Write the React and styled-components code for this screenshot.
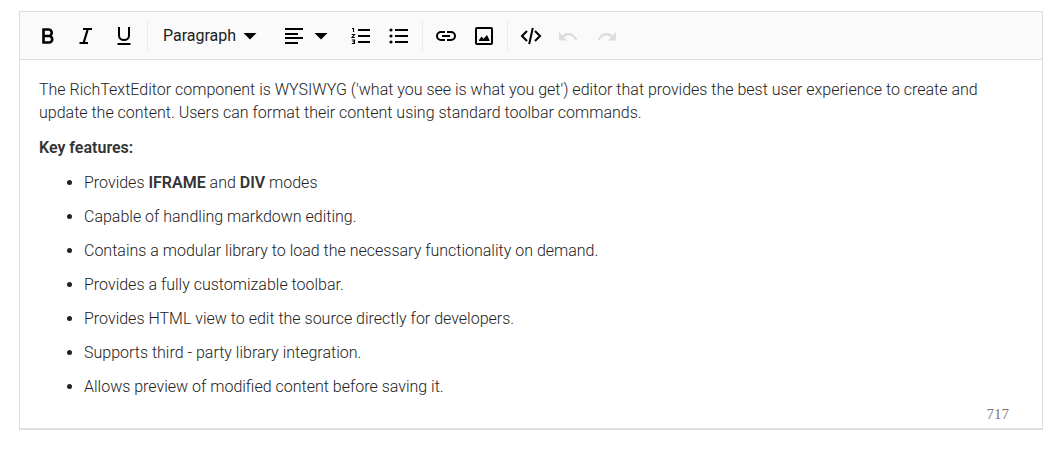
import React from "react";
import styled, { createGlobalStyle } from "styled-components";

const GlobalStyle = createGlobalStyle`
  *, *::before, *::after { box-sizing: border-box; }
  body { margin: 0; background: #fff; font-family: Roboto, "Liberation Sans", sans-serif; }
`;

const Page = styled.main`
  padding: 11px 21px 20px 19px;
`;

const Editor = styled.section`
  border: 1px solid #dedede;
  border-bottom-width: 2px;
  background: #fff;
`;

const Toolbar = styled.div`
  display: flex;
  align-items: center;
  height: 48px;
  padding-left: 9px;
  background: #fafafa;
  border-bottom: 1px solid #dedede;
`;

const Separator = styled.span`
  width: 1px;
  height: 31px;
  margin: 0 4px;
  background: #ebebeb;
`;

const ToolButton = styled.button`
  display: flex;
  flex: none;
  align-items: center;
  justify-content: center;
  width: 38px;
  height: 38px;
  padding: 0;
  border: 0;
  background: transparent;
  color: #000;
  &:disabled { color: #dcdcdc; }
`;

const DropButton = styled(ToolButton)`
  width: auto;
  gap: 2px;
  padding: 0 9px 0 11px;
  font: 400 16px/24px Roboto, "Liberation Sans", sans-serif;
  color: #212121;
  svg { color: #000; }
`;

const IconDropButton = styled(DropButton)`
  gap: 3px;
`;

const Content = styled.div`
  padding: 18px 19px 0;
  font-size: 16px;
  font-weight: 300;
  line-height: 23px;
  color: #222;
  strong { font-weight: 600; color: #333; }
`;

const Paragraph = styled.p`
  margin: 0 0 12px;
`;

const FeatureList = styled.ul`
  margin: 0;
  padding-left: 45px;
`;

const Feature = styled.li`
  margin-bottom: 10px;
  line-height: 24px;
  &:last-child { margin-bottom: 6px; }
`;

const Count = styled.div`
  padding: 0 33px 5px 0;
  text-align: right;
  font: 15px/18px "Liberation Serif", serif;
  color: #777;
`;

const Svg = ({ children }) => (
  <svg width="24" height="24" viewBox="0 0 24 24" fill="none" stroke="currentColor" strokeWidth="2" aria-hidden="true">
    {children}
  </svg>
);

const Bold = () => (
  <Svg><path d="M7.500 5.500h5a3.200 3.200 0 0 1 0 6.500h-5zM7.500 12H13a3.200 3.200 0 0 1 0 6.500H7.500z" strokeWidth="2.6" /></Svg>
);
const Italic = () => (
  <Svg><path d="M9 5h9M5.5 19h8.5M13.8 5l-4.2 14" strokeWidth="2.2" /></Svg>
);
const Underline = () => (
  <Svg><path d="M7 3v8.5a5 4.5 0 0 0 10 0V3M5.5 20h13" /></Svg>
);
const Caret = () => (
  <Svg><path d="M5.5 9h13L12 15.5z" fill="currentColor" stroke="none" /></Svg>
);
const Align = () => (
  <Svg><path d="M3 5h18M3 10h13M3 14h18M3 19h13" /></Svg>
);
const Numbered = () => (
  <Svg>
    <path d="M9 6h12M9 12h12M9 18h12" />
    <path d="M3 4.5h1.5V8M2.8 10.5h2.7L3 13.5h2.8M2.8 16h2.7v3.5H2.8M3.5 17.8h2" strokeWidth="1.1" />
  </Svg>
);
const Bulleted = () => (
  <Svg>
    <path d="M8 6h13M8 12h13M8 18h13" />
    <g fill="currentColor" stroke="none"><circle cx="4" cy="6" r="1.6" /><circle cx="4" cy="12" r="1.6" /><circle cx="4" cy="18" r="1.6" /></g>
  </Svg>
);
const Link = () => (
  <Svg><path d="M11 8H7a4 4 0 0 0 0 8h4M13 8h4a4 4 0 0 1 0 8h-4M8 12h8" /></Svg>
);
const Picture = () => (
  <Svg>
    <rect x="4" y="4" width="16" height="16" rx="1" />
    <path d="M7 17v-1l2.5-3.500 2 2.200L15 11l2.500 5v1z" fill="currentColor" stroke="none" />
  </Svg>
);
const Code = () => (
  <Svg><path d="M8 7l-5 5 5 5M16 7l5 5-5 5M13.8 4l-3.6 16" /></Svg>
);
const Undo = () => (
  <Svg><path d="M2 8v8.5h8l-3-3.2c3.8-3.3 9.5-2.2 11.4 3.2l1.8-.6C17.8 8.8 10.3 6.7 5.3 11.4z" fill="currentColor" stroke="none" /></Svg>
);
const Redo = () => (
  <Svg><path d="M21 8v8.5h-8l3-3.2c-3.8-3.3-9.5-2.2-11.4 3.2l-1.8-.6C5.2 8.8 12.7 6.7 17.7 11.4z" fill="currentColor" stroke="none" /></Svg>
);

const Tool = ({ label, icon: Icon, disabled }) => (
  <ToolButton type="button" aria-label={label} disabled={disabled}><Icon /></ToolButton>
);

const features = [
  <>Provides <strong>IFRAME</strong> and <strong>DIV</strong> modes</>,
  "Capable of handling markdown editing.",
  "Contains a modular library to load the necessary functionality on demand.",
  "Provides a fully customizable toolbar.",
  "Provides HTML view to edit the source directly for developers.",
  "Supports third - party library integration.",
  "Allows preview of modified content before saving it.",
];

export default function App() {
  return (
    <Page>
      <GlobalStyle />
      <Editor>
        <Toolbar role="toolbar" aria-label="Formatting">
          <Tool label="Bold" icon={Bold} />
          <Tool label="Italic" icon={Italic} />
          <Tool label="Underline" icon={Underline} />
          <Separator />
          <DropButton type="button" aria-haspopup="menu">Paragraph<Caret /></DropButton>
          <IconDropButton type="button" aria-haspopup="menu" aria-label="Alignment"><Align /><Caret /></IconDropButton>
          <Tool label="Numbered list" icon={Numbered} />
          <Tool label="Bulleted list" icon={Bulleted} />
          <Separator />
          <Tool label="Insert link" icon={Link} />
          <Tool label="Insert image" icon={Picture} />
          <Separator />
          <Tool label="Code view" icon={Code} />
          <Tool label="Undo" icon={Undo} disabled />
          <Tool label="Redo" icon={Redo} disabled />
        </Toolbar>
        <Content>
          <Paragraph>
            The RichTextEditor component is WYSIWYG ('what you see is what you get') editor that provides the best user
            experience to create and update the content. Users can format their content using standard toolbar commands.
          </Paragraph>
          <Paragraph><strong>Key features:</strong></Paragraph>
          <FeatureList>
            {features.map((text, i) => <Feature key={i}>{text}</Feature>)}
          </FeatureList>
        </Content>
        <Count>717</Count>
      </Editor>
    </Page>
  );
}
